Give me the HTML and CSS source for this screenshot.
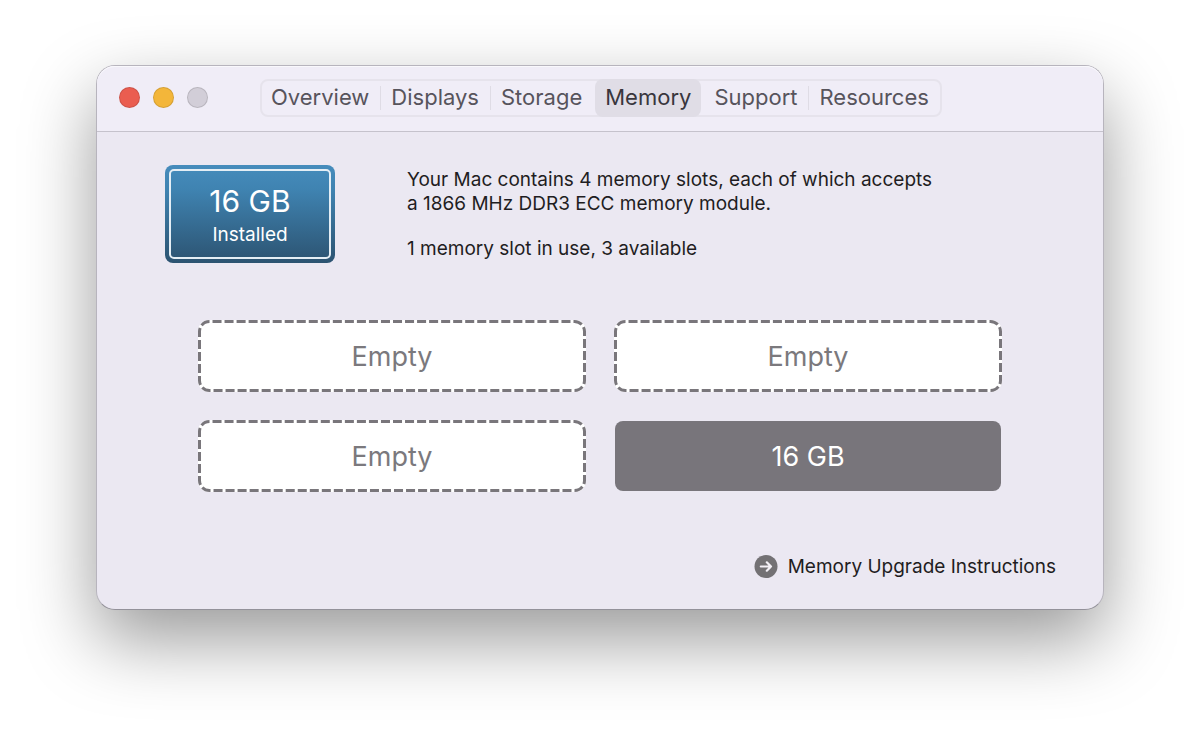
FILE: index.html
```html
<!DOCTYPE html>
<html lang="en">
<head>
    <meta charset="UTF-8">
    <meta name="viewport" content="width=device-width, initial-scale=1.0">
    <title>Memory</title>
    <link rel="stylesheet" href="styles.css">
</head>
<body>
    <main class="window">
        <header class="titlebar">
            <div class="controls">
                <button type="button" class="dot close" aria-label="Close"></button>
                <button type="button" class="dot minimize" aria-label="Minimize"></button>
                <button type="button" class="dot zoom" aria-label="Zoom" disabled></button>
            </div>
            <nav class="tabs">
                <button type="button" class="tab">Overview</button>
                <button type="button" class="tab">Displays</button>
                <button type="button" class="tab">Storage</button>
                <button type="button" class="tab active">Memory</button>
                <button type="button" class="tab">Support</button>
                <button type="button" class="tab">Resources</button>
            </nav>
        </header>

        <section class="summary">
            <div class="badge">
                <div class="badge-inner">
                    <span class="badge-size">16 GB</span>
                    <span class="badge-label">Installed</span>
                </div>
            </div>
            <div class="info">
                <p>Your Mac contains 4 memory slots, each of which accepts<br>a 1866 MHz DDR3 ECC memory module.</p>
                <p>1 memory slot in use, 3 available</p>
            </div>
        </section>

        <section class="slots">
            <div class="slot">
                <svg class="outline" aria-hidden="true"><rect x="1.5" y="1.5" rx="10" pathLength="888"/></svg>
                <span>Empty</span>
            </div>
            <div class="slot">
                <svg class="outline" aria-hidden="true"><rect x="1.5" y="1.5" rx="10" pathLength="888"/></svg>
                <span>Empty</span>
            </div>
            <div class="slot">
                <svg class="outline" aria-hidden="true"><rect x="1.5" y="1.5" rx="10" pathLength="888"/></svg>
                <span>Empty</span>
            </div>
            <div class="slot filled"><span>16 GB</span></div>
        </section>

        <footer class="footer">
            <a href="#" class="upgrade">
                <svg width="24" height="24" viewBox="0 0 24 24" aria-hidden="true">
                    <circle cx="12" cy="11.5" r="11.5" fill="#737174"/>
                    <path d="M6.8 11.5H17M12.8 7.3L17 11.5L12.8 15.7" fill="none" stroke="#f3f0f6" stroke-width="2.2" stroke-linecap="round" stroke-linejoin="round"/>
                </svg>
                Memory Upgrade Instructions
            </a>
        </footer>
    </main>
</body>
</html>
```
FILE: styles.css
```css
* {
    box-sizing: border-box;
}
body {
    min-height: 100vh;
    margin: 0;
    padding: 65px 8%;
    background: #fff;
    font-family: Inter, "Liberation Sans", sans-serif;
    font-size: 19px;
    line-height: 24px;
    color: #1f1d22;
}
button {
    font: inherit;
    padding: 0;
    border: none;
    cursor: pointer;
}
p {
    margin: 0 0 21px;
}
p:last-child {
    margin-bottom: 0;
}
.window {
    background: #ebe8f2;
    border: 1px solid #b7b4bd;
    border-bottom-color: #93919a;
    border-radius: 19px;
    box-shadow: 0 30px 72px rgba(0, 0, 0, 0.4);
}

/* title bar */
.titlebar {
    display: flex;
    align-items: center;
    gap: 52px;
    height: 66px;
    padding: 0 22px 2px;
    background: #f0edf7;
    border-bottom: 1px solid #c5c2cc;
    border-radius: 18px 18px 0 0;
    box-shadow: inset 0 1px 0 #f9f8fc;
}
.controls {
    display: flex;
    gap: 13px;
}
.dot {
    width: 21px;
    height: 21px;
    border: 1px solid rgba(0, 0, 0, 0.12);
    border-radius: 50%;
}
.close {
    background: #ea5d50;
}
.minimize {
    background: #f3b63a;
}
.zoom {
    background: #d2ced8;
}
.tabs {
    display: flex;
    height: 38px;
    border: 2px solid #e6e3ec;
    border-radius: 8px;
}
.tab {
    margin: -2px 0;
    padding: 0 11px 2px;
    background: none;
    color: #57545c;
    font-size: 22px;
    line-height: 34px;
    white-space: nowrap;
}
.tab:first-child {
    padding-left: 9px;
}
.tab + .tab {
    background: linear-gradient(#dfdce5, #dfdce5) no-repeat left center / 1px 24px;
}
.tab.active {
    margin: -2px 2px;
    padding: 0 10px 2px;
    background: #e0dde6;
    border-radius: 8px;
    color: #39363d;
}
.tab.active + .tab {
    background: none;
}

/* installed memory */
.summary {
    display: flex;
    gap: 72px;
    padding: 33px 68px 0;
}
.badge {
    flex: none;
    width: 170px;
    height: 98px;
    padding: 4px;
    border-radius: 8px;
    background: linear-gradient(#468cbc, #3f83b1 25%, #2c5371);
    color: #fff;
}
.badge-inner {
    display: flex;
    flex-direction: column;
    align-items: center;
    justify-content: center;
    gap: 6px;
    height: 100%;
    padding-top: 3px;
    border: 2px solid #e4eef5;
    border-radius: 5px;
}
.badge-size {
    font-size: 30px;
    line-height: 32px;
}
.info {
    padding-top: 3px;
}

/* slots */
.slots {
    display: grid;
    grid-template-columns: 1fr 1fr;
    gap: 28px;
    margin-top: 57px;
    padding: 0 101px;
}
.slot {
    position: relative;
    display: flex;
    align-items: center;
    justify-content: center;
    height: 72px;
    padding-top: 2px;
    border-radius: 11px;
    background: #fff;
    color: #7b797d;
    font-size: 27px;
}
.outline {
    position: absolute;
    inset: 0;
    width: 100%;
    height: 100%;
}
.outline rect {
    width: calc(100% - 3px);
    height: calc(100% - 3px);
    fill: none;
    stroke: #79767b;
    stroke-width: 3;
    stroke-dasharray: 9 3;
    stroke-dashoffset: 9;
}
.slot.filled {
    height: 70px;
    margin: 1px;
    border-radius: 8px;
    background: #78757b;
    color: #fff;
}

.footer {
    display: flex;
    justify-content: flex-end;
    padding: 63px 47px 30px;
}
.upgrade {
    display: flex;
    align-items: center;
    gap: 10px;
    color: inherit;
    text-decoration: none;
}
```
